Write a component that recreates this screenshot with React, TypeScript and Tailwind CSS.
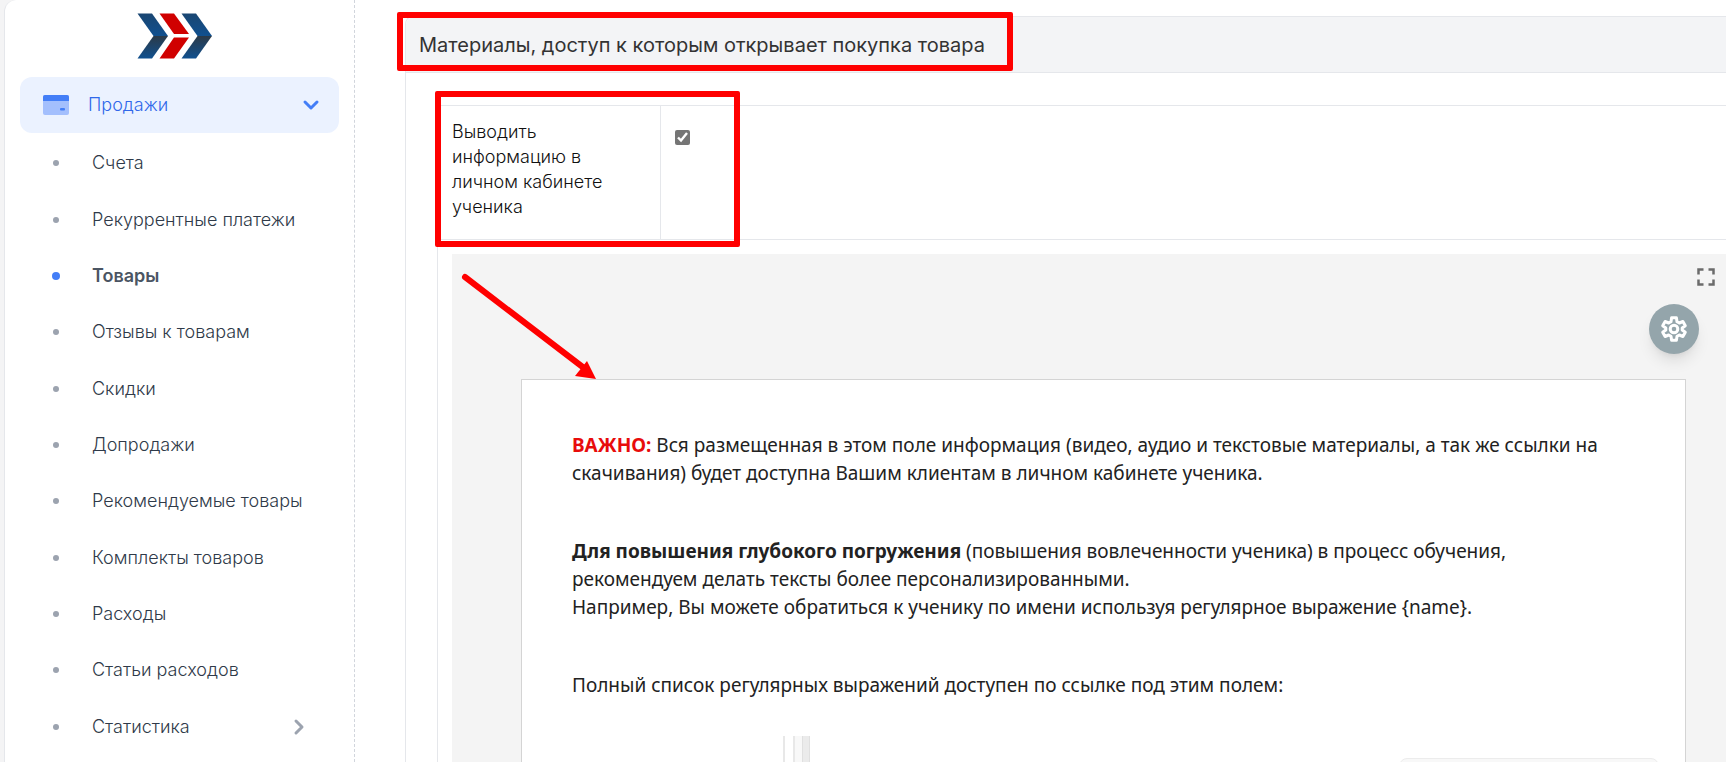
import { ChevronDown, ChevronRight } from 'lucide-react';

const menuItems = [
  { title: 'Счета' },
  { title: 'Рекуррентные платежи' },
  { title: 'Товары', active: true },
  { title: 'Отзывы к товарам' },
  { title: 'Скидки' },
  { title: 'Допродажи' },
  { title: 'Рекомендуемые товары' },
  { title: 'Комплекты товаров' },
  { title: 'Расходы' },
  { title: 'Статьи расходов' },
  { title: 'Статистика', nested: true },
];

function Logo() {
  return (
    <svg className="w-[76px] h-[46px]" viewBox="0 0 76 46">
      <defs>
        <linearGradient id="logoTop" x1="0" y1="0" x2="0" y2="1">
          <stop offset="0" stopColor="#1a4672" />
          <stop offset="1" stopColor="#10508f" />
        </linearGradient>
        <linearGradient id="logoBottom" x1="0" y1="0" x2="0" y2="1">
          <stop offset="0" stopColor="#2b3a48" />
          <stop offset="1" stopColor="#10508f" />
        </linearGradient>
      </defs>
      <path d="M0.500 0.500H15L31 23H16.500z" fill="url(#logoTop)" />
      <path d="M16.500 23H31L15 45.500H0.500z" fill="url(#logoBottom)" />
      <path d="M22.500 0.500H37L52 21H37z" fill="#d00000" />
      <path d="M37 24.500H52L37 45.500H22.500z" fill="#d00000" />
      <path d="M44.500 0.500H59L75 23H60.500z" fill="url(#logoTop)" />
      <path d="M60.500 23H75L59 45.500H44.500z" fill="url(#logoBottom)" />
    </svg>
  );
}

function Sidebar() {
  return (
    <aside className="w-[351px] shrink-0 bg-white rounded-tl-xl border-l border-l-gray-200 border-r border-r-gray-300 border-dashed [border-left-style:solid] px-[15px] pt-[13px] font-[Inter,sans-serif] text-lg font-light">
      <a href="#" aria-label="Главная" className="flex justify-center pr-2.5">
        <Logo />
      </a>
      <button
        type="button"
        className="mt-[18px] w-full h-14 flex items-center rounded-xl bg-[#ebf2ff] pl-[23px] pr-4 text-[#3068ea]"
      >
        <svg className="w-[26px] h-5 mr-[19px]" viewBox="0 0 26 20">
          <rect width="26" height="20" rx="2" fill="#a3bffd" />
          <path d="M0 6V2a2 2 0 0 1 2-2h22a2 2 0 0 1 2 2v4z" fill="#437ef7" />
          <rect x="17" y="13" width="5" height="2.500" rx="1" fill="#437ef7" />
        </svg>
        Продажи
        <ChevronDown className="ml-auto w-6 h-6 text-[#437ef7]" strokeWidth={3} />
      </button>
      <nav className="grid auto-rows-fr min-h-[620px] mt-0.5">
        {menuItems.map((item) => (
          <a
            key={item.title}
            href="#"
            className={`flex items-center whitespace-nowrap pl-8 pr-7 ${item.active ? 'font-semibold text-[#4b5563]' : 'text-[#2f3a49]'}`}
          >
            <span className="w-2 mr-8 flex justify-center">
              <span className={`rounded-full ${item.active ? 'w-2 h-2 bg-[#437ef7]' : 'w-1.5 h-1.5 bg-[#9ca3af]'}`} />
            </span>
            {item.title}
            {item.nested && <ChevronRight className="ml-auto w-6 h-6 text-[#9ca3af]" strokeWidth={3} />}
          </a>
        ))}
      </nav>
    </aside>
  );
}

function EditorPage() {
  return (
    <article className="ml-[69px] mr-10 mt-[125px] bg-white border border-[#d4d4d4] pt-[51px] px-[50px] font-['Noto_Sans',sans-serif] text-[19px] leading-7 text-[#222]">
      <p className="mb-[50px]">
        <strong className="text-[#e80c0c]">ВАЖНО:</strong> Вся размещенная в этом поле информация (видео, аудио и
        текстовые материалы, а так же ссылки на
        <br />
        скачивания) будет доступна Вашим клиентам в личном кабинете ученика.
      </p>
      <p className="mb-[50px]">
        <strong>Для повышения глубокого погружения</strong> (повышения вовлеченности ученика) в процесс обучения,
        <br />
        рекомендуем делать тексты более персонализированными.
        <br />
        Например, Вы можете обратиться к ученику по имени используя регулярное выражение {'{name}'}.
      </p>
      <p>Полный список регулярных выражений доступен по ссылке под этим полем:</p>
      {/* Embedded preview */}
      <div className="mt-[37px] ml-[211px] -mr-6 flex justify-between">
        <div className="flex h-[60px]">
          <span className="w-0.5 bg-[#e8e8e8] mr-2" />
          <span className="w-0.5 bg-[#e8e8e8]" />
          <span className="w-[7px] bg-[#f8f8f8]" />
          <span className="w-2 bg-[#ebebeb] border-x border-[#e0e0e0]" />
        </div>
        <div className="mt-[22px] w-[260px] rounded-lg border border-[#ececec] bg-[#f8f8f8]" />
      </div>
    </article>
  );
}

export default function App() {
  return (
    <div className="h-screen overflow-hidden flex bg-[#f4f4f5] pl-1">
      <Sidebar />
      <main className="flex-1 min-w-0 bg-white pt-4 pl-[50px]">
        <section className="relative h-full border-t border-l border-[#e5e7eb] rounded-tl-lg font-[Inter,sans-serif] text-[#333]">
          <h2 className="h-14 flex items-center bg-[#f3f4f6] border-b border-[#e5e7eb] rounded-tl-lg pl-[13px] text-xl">
            Материалы, доступ к которым открывает покупка товара
          </h2>
          <div className="mt-8 ml-[31px]">
            <div className="flex border border-r-0 border-[#e5e7eb] h-[135px] text-lg leading-[25px] font-light text-[#111]">
              <label htmlFor="show-info" className="w-[223px] shrink-0 pl-3.5 pr-10 pt-[13px] border-r border-[#e5e7eb]">
                Выводить информацию в личном кабинете ученика
              </label>
              <div className="pl-3.5 pt-6">
                <input
                  id="show-info"
                  type="checkbox"
                  defaultChecked
                  className="block w-[15px] h-[15px] accent-[#757575]"
                />
              </div>
            </div>
            <div className="border-l border-[#e5e7eb] pl-3.5 pt-3.5">
              <div className="relative bg-[#f4f4f4] flow-root min-h-[560px]">
                <EditorPage />
                <button type="button" aria-label="Во весь экран" className="absolute right-[11px] top-3.5">
                  <svg className="w-[18px] h-[18px]" viewBox="0 0 18 18" fill="none" stroke="#6b6b6b" strokeWidth="2.500">
                    <path d="M1.500 6.500v-5h5M11.500 1.500h5v5M16.500 11.500v5h-5M6.500 16.500h-5v-5" />
                  </svg>
                </button>
                <button
                  type="button"
                  aria-label="Настройки"
                  className="absolute right-[27px] top-[50px] w-[50px] h-[50px] rounded-full bg-[#94a5ab] shadow-lg flex items-center justify-center"
                >
                  <svg className="w-7 h-7" viewBox="0 0 28 28" fill="none" stroke="#fff" strokeWidth="3" strokeLinejoin="round">
                    <path d="M11.600 2.800h4.800l.6 3.900 2.300 1.300 3.600-1.500 2.400 4.200-3.100 2.300v2l3.100 2.300-2.400 4.200-3.600-1.500-2.300 1.300-.6 3.900h-4.800l-.6-3.900-2.300-1.300-3.600 1.500-2.400-4.200 3.100-2.300v-2l-3.100-2.300 2.400-4.200 3.600 1.500 2.300-1.300z" />
                    <circle cx="14" cy="14" r="3.800" />
                  </svg>
                </button>
                {/* Callout arrow */}
                <svg className="absolute left-2 top-4 w-[140px] h-[112px] pointer-events-none" viewBox="0 0 140 112">
                  <path d="M5 7L124 98" stroke="#f00" strokeWidth="6" strokeLinecap="round" />
                  <path d="M136 109L115 106L127 91z" fill="#f00" />
                </svg>
              </div>
            </div>
          </div>
          {/* Callout frames */}
          <div className="absolute -left-[9px] -top-[5px] w-[616px] h-[59px] border-6 border-[#f00] rounded-xs pointer-events-none" />
          <div className="absolute left-[29px] top-[74px] w-[305px] h-[156px] border-6 border-[#f00] rounded-xs pointer-events-none" />
        </section>
      </main>
    </div>
  );
}
